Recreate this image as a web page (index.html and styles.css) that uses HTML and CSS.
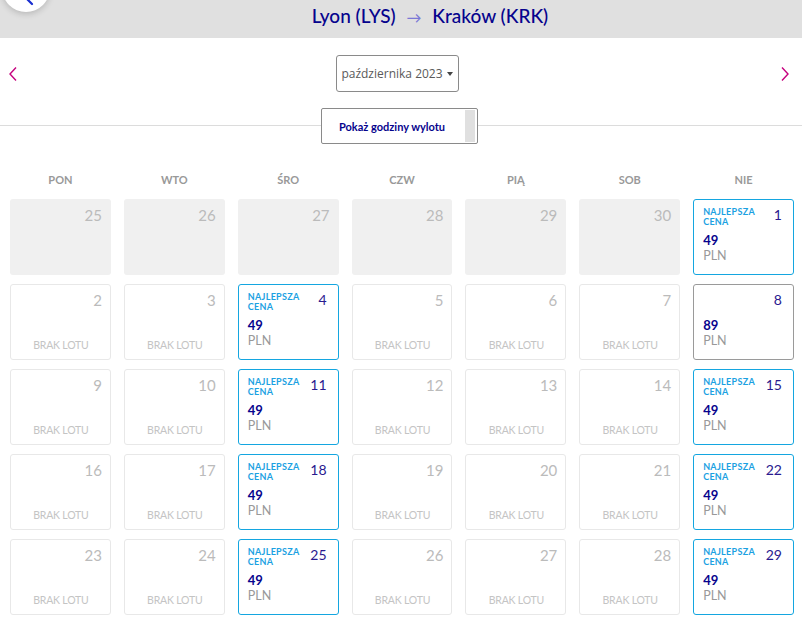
FILE: index.html
```html
<!DOCTYPE html>
<html lang="pl">
<head>
    <meta charset="UTF-8">
    <meta name="viewport" content="width=device-width, initial-scale=1.0">
    <title>Lyon - Kraków</title>
    <link rel="stylesheet" href="styles.css">
</head>
<body>
    <header class="route-bar">
        <a href="#" class="back-btn">
            <svg width="14" height="14" viewBox="0 0 14 14"><path d="M9 2 L4 7 L9 12" fill="none" stroke="#1a2fd0" stroke-width="2.2" stroke-linecap="round"/></svg>
        </a>
        <h1 class="route-title">Lyon (LYS) <span class="arrow">&rarr;</span> Kraków (KRK)</h1>
    </header>

    <div class="month-nav">
        <a href="#" class="nav-arrow">
            <svg width="10" height="16" viewBox="0 0 10 16"><path d="M8 1.5 L2 8 L8 14.5" fill="none" stroke="#c6007e" stroke-width="1.4"/></svg>
        </a>
        <button class="month-select">października 2023 <span class="caret"></span></button>
        <a href="#" class="nav-arrow">
            <svg width="10" height="16" viewBox="0 0 10 16"><path d="M2 1.5 L8 8 L2 14.5" fill="none" stroke="#c6007e" stroke-width="1.4"/></svg>
        </a>
    </div>

    <div class="toggle-row">
        <button class="times-btn">Pokaż godziny wylotu<span class="times-scroll"></span></button>
    </div>

    <div class="calendar">
        <div class="weekday">PON</div>
        <div class="weekday">WTO</div>
        <div class="weekday">ŚRO</div>
        <div class="weekday">CZW</div>
        <div class="weekday">PIĄ</div>
        <div class="weekday">SOB</div>
        <div class="weekday">NIE</div>
    </div>

    <script>
        // days of the grid: prev month first, then october
        let days = [
            {n: 25, type: "past"}, {n: 26, type: "past"}, {n: 27, type: "past"}, {n: 28, type: "past"},
            {n: 29, type: "past"}, {n: 30, type: "past"}, {n: 1, type: "best", price: 49}
        ];
        let prices = {4: 49, 8: 89, 11: 49, 15: 49, 18: 49, 22: 49, 25: 49, 29: 49};
        for (let d = 2; d <= 29; d++) {
            if (prices[d]) {
                days.push({n: d, type: d === 8 ? "price" : "best", price: prices[d]});
            } else {
                days.push({n: d, type: "empty"});
            }
        }

        let cal = document.querySelector(".calendar");
        days.forEach((el) => {
            let cell = document.createElement("div");
            cell.classList.add("day", "day-" + el.type);

            let top = document.createElement("div");
            top.classList.add("day-top");

            let label = document.createElement("span");
            label.classList.add("best-label");
            if (el.type === "best") label.innerHTML = "NAJLEPSZA<br>CENA";

            let num = document.createElement("span");
            num.classList.add("day-num");
            num.innerText = el.n;

            top.append(label, num);
            cell.append(top);

            if (el.type === "best" || el.type === "price") {
                let amount = document.createElement("div");
                amount.classList.add("amount");
                amount.innerText = el.price;
                let cur = document.createElement("div");
                cur.classList.add("currency");
                cur.innerText = "PLN";
                cell.append(amount, cur);
            } else if (el.type === "empty") {
                let none = document.createElement("div");
                none.classList.add("no-flight");
                none.innerText = "BRAK LOTU";
                cell.append(none);
            }
            cal.append(cell);
        });
    </script>
</body>
</html>
```

FILE: styles.css
```css
* {
    margin: 0;
    padding: 0;
    box-sizing: border-box;
}

html, body {
    height: 623px;
    overflow: hidden;
}

body {
    font-family: 'Lato', 'Open Sans', sans-serif;
    background-color: #fff;
    color: #333;
}

.route-bar {
    position: relative;
    height: 38px;
    background-color: #e0e0e0;
    display: flex;
    justify-content: center;
    align-items: center;
    padding-left: 58px;
}

.back-btn {
    position: absolute;
    left: 2px;
    top: -36px;
    width: 48px;
    height: 48px;
    border-radius: 50%;
    background-color: #fff;
    box-shadow: 0 2px 6px rgba(0, 0, 0, 0.18);
    display: flex;
    justify-content: center;
    align-items: flex-end;
    padding-bottom: 6px;
    padding-left: 8px;
}

.route-title {
    font-size: 19px;
    font-weight: 500;
    color: #06038d;
    margin-top: -7px;
}

.route-title .arrow {
    color: #7a78d6;
    font-size: 15px;
    margin: 0 6px;
}

.month-nav {
    display: flex;
    justify-content: space-between;
    align-items: center;
    padding: 17px 10px 0 6px;
}

.nav-arrow {
    display: flex;
    padding: 0 2px;
}

.month-select {
    width: 123px;
    height: 37px;
    margin-left: -4px;
    border: 1px solid #8a8a8a;
    border-radius: 3px;
    background-color: #fff;
    font-family: 'Open Sans', sans-serif;
    font-size: 12px;
    color: #5a5a5a;
    display: flex;
    align-items: center;
    justify-content: center;
    gap: 4px;
}

.caret {
    width: 0;
    height: 0;
    border-left: 3px solid transparent;
    border-right: 3px solid transparent;
    border-top: 4px solid #444;
}

.toggle-row {
    margin-top: 16px;
    display: flex;
    justify-content: center;
    background: linear-gradient(#fff 17px, #dcdcdc 17px, #dcdcdc 18px, #fff 18px);
}

.times-btn {
    position: relative;
    width: 157px;
    height: 36px;
    margin-left: -4px;
    border: 1px solid #8a8a8a;
    border-radius: 2px;
    background-color: #fff;
    font-family: inherit;
    font-size: 11px;
    font-weight: bold;
    color: #06038d;
    padding-right: 14px;
}

.times-scroll {
    position: absolute;
    right: 2px;
    top: 1px;
    bottom: 1px;
    width: 10px;
    background-color: #e0e0e0;
}

.calendar {
    display: grid;
    grid-template-columns: repeat(7, 1fr);
    grid-template-rows: 26px;
    grid-auto-rows: 76px;
    column-gap: 13px;
    row-gap: 9px;
    margin: 20px 8px 0 10px;
}

.weekday {
    text-align: center;
    font-size: 11px;
    font-weight: bold;
    color: #999;
    padding-top: 9px;
}

.day {
    border-radius: 3px;
    padding: 6px 9px 0 10px;
    display: flex;
    flex-direction: column;
}

.day-top {
    display: flex;
    justify-content: space-between;
    align-items: flex-start;
    height: 25px;
}

.day-num {
    font-size: 15px;
    color: #bbb;
    line-height: 20px;
}

.best-label {
    font-size: 9px;
    font-weight: bold;
    color: #1ba1e2;
    line-height: 10px;
    letter-spacing: 0.3px;
    margin-top: 2px;
}

.day-past {
    background-color: #f0f0f0;
}

.day-empty {
    border: 1px solid #e8e8e8;
    padding: 5px 8px 0 9px;
}

.day-best, .day-price {
    padding: 5px 11px 0 9px;
}

.day-best {
    border: 1px solid #14a6e0;
}

.day-price {
    border: 1px solid #9a9a9a;
}

.day-best .day-num, .day-price .day-num {
    color: #2a1a8f;
    font-size: 14px;
}

.no-flight {
    margin-top: auto;
    margin-bottom: 8px;
    text-align: center;
    font-size: 10.5px;
    letter-spacing: -0.2px;
    color: #c4c4c4;
}

.amount {
    font-size: 13px;
    font-weight: bold;
    color: #06038d;
    margin-top: 3px;
    line-height: 15px;
}

.currency {
    font-size: 12.5px;
    color: #999;
    line-height: 15px;
}
```
